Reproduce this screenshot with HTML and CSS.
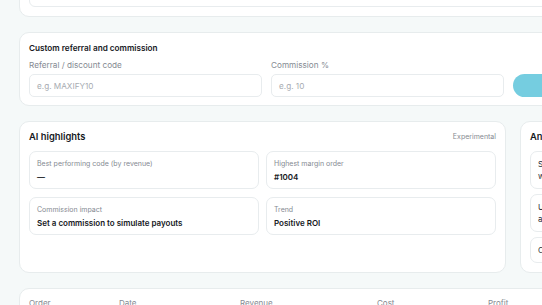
FILE: index.html
```html
<!DOCTYPE html>
<html>
<head>
<meta charset="utf-8">
<link rel="stylesheet" href="styles.css">
</head>
<body>
<div class="page">
  <section class="card top-card">
    <div class="box"></div>
  </section>

  <section class="card form-card">
    <div class="card-title">Custom referral and commission</div>
    <div class="form-row">
      <div class="field">
        <div class="label">Referral / discount code</div>
        <div class="input">e.g. MAXIFY10</div>
      </div>
      <div class="field">
        <div class="label">Commission %</div>
        <div class="input">e.g. 10</div>
      </div>
      <button class="btn"></button>
    </div>
  </section>

  <div class="split">
    <section class="card">
      <div class="head-row">
        <div class="card-title big">AI highlights</div>
        <div class="tag">Experimental</div>
      </div>
      <div class="tiles">
        <div class="tile">
          <div class="tile-label">Best performing code (by revenue)</div>
          <div class="tile-value">—</div>
        </div>
        <div class="tile">
          <div class="tile-label">Highest margin order</div>
          <div class="tile-value">#1004</div>
        </div>
        <div class="tile">
          <div class="tile-label">Commission impact</div>
          <div class="tile-value">Set a commission to simulate payouts</div>
        </div>
        <div class="tile">
          <div class="tile-label">Trend</div>
          <div class="tile-value">Positive ROI</div>
        </div>
      </div>
    </section>

    <section class="card side">
      <div class="card-title big">Anomalies</div>
      <div class="notes">
        <div class="note">Spikes<br>watch</div>
        <div class="note">Unusual<br>activity</div>
        <div class="note">Clear</div>
      </div>
    </section>
  </div>

  <section class="card table-card">
    <div class="thead">
      <div class="th">Order</div>
      <div class="th">Date</div>
      <div class="th">Revenue</div>
      <div class="th">Cost</div>
      <div class="th">Profit</div>
    </div>
  </section>
</div>
</body>
</html>
```

FILE: styles.css
```css
html, body {
  margin: 0;
  padding: 0;
  background: #f5f9f9;
  font-family: Inter, "Noto Sans", "Liberation Sans", sans-serif;
  color: #1d2127;
  overflow: hidden;
  width: 542px;
  height: 305px;
}

.page {
  width: 760px;
  margin-top: -36px;
  padding-left: 19px;
  display: flex;
  flex-direction: column;
  gap: 15px;
}

.card {
  background: #ffffff;
  border: 1px solid #e7eced;
  border-radius: 10px;
  padding: 8px 9px 8px;
  box-sizing: border-box;
}

.top-card {
  padding-top: 10px;
  padding-bottom: 9px;
}

.form-card {
  padding-top: 9px;
}

.box {
  height: 30px;
  border: 1px solid #e8ecee;
  border-radius: 6px;
}

.card-title {
  font-size: 8.2px;
  font-weight: 600;
  line-height: 12px;
  color: #15181d;
}

.card-title.big {
  font-size: 9.4px;
  line-height: 13px;
}

.form-row {
  display: grid;
  grid-template-columns: 233px 233px 1fr;
  column-gap: 9px;
  align-items: end;
  margin-top: 6px;
}

.label {
  font-size: 8.2px;
  color: #858a92;
  line-height: 11px;
  margin-bottom: 3px;
}

.input {
  height: 23px;
  box-sizing: border-box;
  border: 1px solid #e8ecee;
  border-radius: 5px;
  background: #fff;
  font-size: 8.2px;
  color: #a7abb1;
  padding: 0 7px;
  display: flex;
  align-items: center;
}

.btn {
  height: 23px;
  width: 120px;
  border: none;
  border-radius: 12px;
  background: #75cde0;
}

.split {
  display: grid;
  grid-template-columns: 487px 1fr;
  column-gap: 14px;
}

.head-row {
  display: flex;
  justify-content: space-between;
  align-items: center;
}

.tag {
  font-size: 7px;
  color: #858a92;
}

.tiles {
  display: grid;
  grid-template-columns: 1fr 1fr;
  column-gap: 7px;
  row-gap: 8px;
  margin-top: 8px;
}

.tile {
  height: 38px;
  box-sizing: border-box;
  border: 1px solid #e8ecee;
  border-radius: 7px;
  padding: 6px 7px;
}

.tile-label {
  font-size: 7px;
  color: #858a92;
  line-height: 11px;
}

.tile-value {
  font-size: 8px;
  font-weight: 600;
  color: #15181d;
  line-height: 13px;
  margin-top: 2px;
}

.side {
  padding-bottom: 9px;
}

.notes {
  display: flex;
  flex-direction: column;
  gap: 5px;
  margin-top: 8px;
}

.note {
  border: 1px solid #e8ecee;
  border-radius: 7px;
  padding: 6px 7px;
  font-size: 8px;
  line-height: 12px;
  color: #2a2e35;
}

.table-card {
  padding-top: 8px;
  height: 40px;
}

.thead {
  display: grid;
  grid-template-columns: 90px 121px 137px 111px 100px;
}

.th {
  font-size: 8px;
  line-height: 12px;
  color: #858a92;
}
```
